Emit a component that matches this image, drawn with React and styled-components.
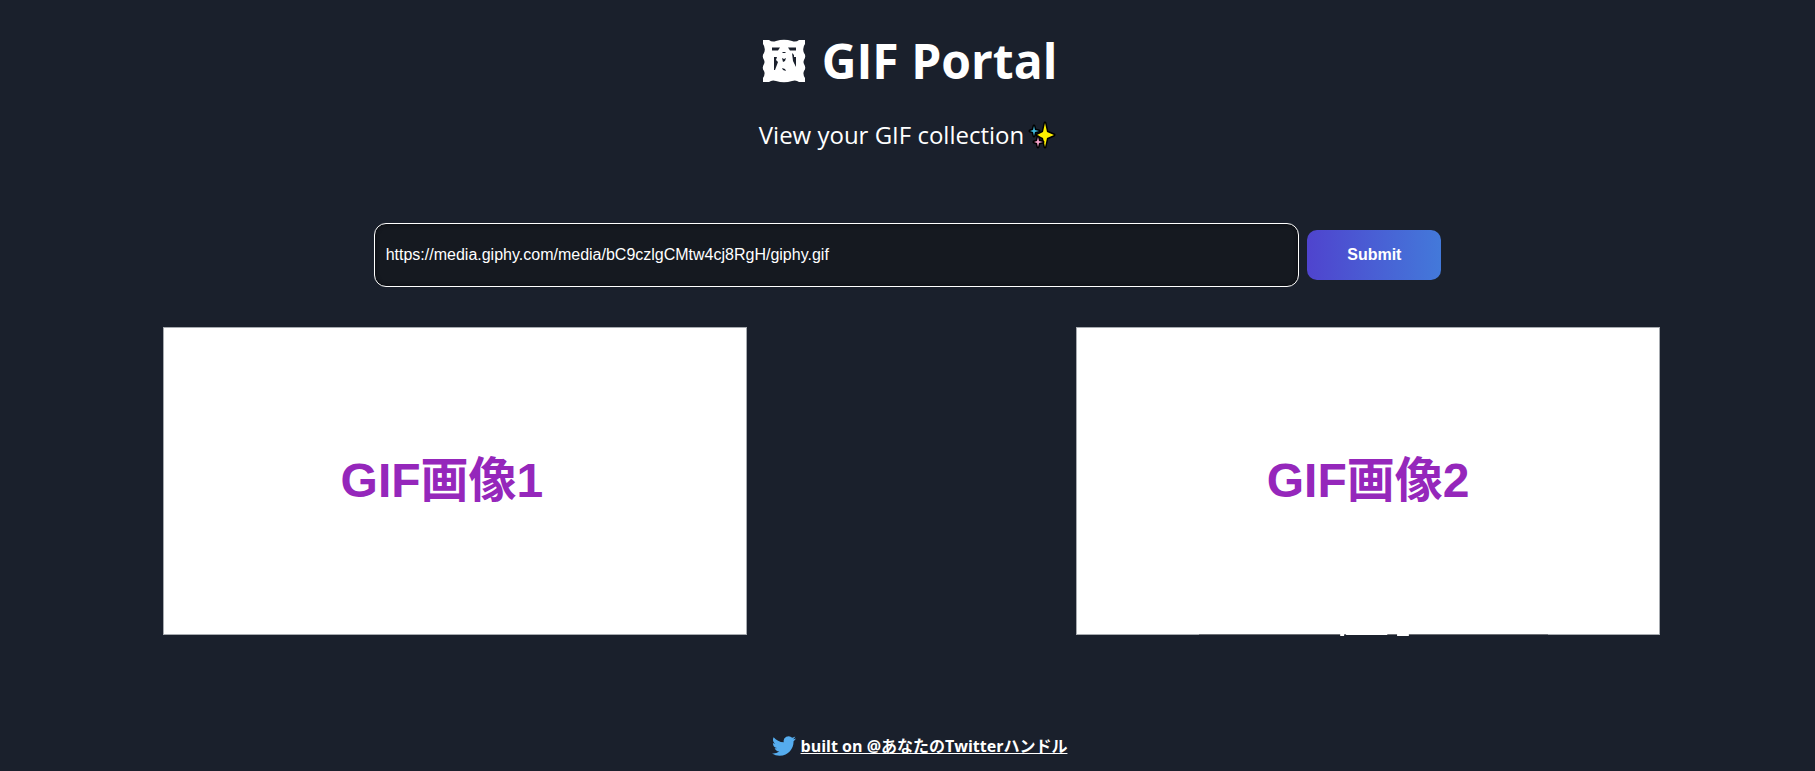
import React, { useState } from "react";
import styled, { createGlobalStyle } from "styled-components";

const uiFont = `"Open Sans", "Noto Sans", "Noto Sans CJK JP", sans-serif`;
const plainFont = `"Liberation Sans", "Noto Sans CJK JP", sans-serif`;

const GlobalStyle = createGlobalStyle`
  *, *::before, *::after { box-sizing: border-box; }
  body { margin: 0; background: #1a202c; color: #fff; font-family: ${uiFont}; }
`;

const Page = styled.div`
  min-height: 100vh;
  display: flex;
  flex-direction: column;
  text-align: center;
`;

const Header = styled.header`
  padding-top: 27px;
`;

const Title = styled.h1`
  display: flex;
  justify-content: center;
  align-items: center;
  gap: 16px;
  margin: 0;
  padding-left: 4px;
  font-size: 48px;
  line-height: 68px;
  font-weight: 700;
`;

const FrameIcon = styled.svg`
  width: 44px;
  height: 44px;
  flex: none;
`;

const Subtitle = styled.p`
  display: flex;
  justify-content: center;
  align-items: center;
  gap: 4px;
  margin: 23px 0 0;
  font-size: 24px;
  line-height: 34px;
`;

const SparkleIcon = styled.svg`
  width: 28px;
  height: 28px;
  flex: none;
`;

const Form = styled.form`
  display: flex;
  justify-content: center;
  align-items: center;
  gap: 8px;
  margin-top: 71px;
`;

const LinkInput = styled.input`
  flex: 0 1 51%;
  min-width: 0;
  height: 64px;
  padding: 0 11px;
  border: 1px solid #fff;
  border-radius: 12px;
  outline: none;
  background: #151920;
  box-shadow: inset 0 0 4px #08080c;
  color: #fff;
  font: 16px ${plainFont};
`;

const SubmitButton = styled.button`
  width: 134px;
  height: 50px;
  border: 0;
  border-radius: 10px;
  background: linear-gradient(90deg, #4f44ce, #4379da);
  color: #fff;
  font: 700 16px ${plainFont};
  cursor: pointer;
`;

const Gallery = styled.main`
  display: flex;
  justify-content: space-between;
  align-items: flex-start;
  margin-top: 40px;
  padding: 0 155px 0 163px;
`;

const Card = styled.figure`
  position: relative;
  flex: 0 0 39%;
  aspect-ratio: 583 / 308;
  display: flex;
  justify-content: center;
  align-items: center;
  margin: 0;
  padding-right: ${(p) => p.$inset}px;
  border: 1px solid #a7abb0;
  background: #fff;
`;

const Caption = styled.figcaption`
  color: #9527bb;
  font: 700 48px/60px ${plainFont};
`;

const CardEdge = styled.svg`
  position: absolute;
  top: 100%;
  left: 21%;
  width: 60%;
  height: 2px;
`;

const Footer = styled.footer`
  display: flex;
  justify-content: center;
  align-items: center;
  gap: 5px;
  margin-top: auto;
  padding: 0 0 13px 24px;
`;

const BirdIcon = styled.svg`
  width: 24px;
  height: 24px;
  flex: none;
`;

const FooterLink = styled.a`
  color: #fff;
  font-size: 16px;
  line-height: 24px;
  font-weight: 700;
`;

const Frame = () => (
  <FrameIcon viewBox="0 0 44 44" aria-hidden="true">
    <path
      fill="#fff"
      d="M1 1H7Q10 3.500 14 2Q22-.5 30 2Q34 3.500 37 1H43V5Q40 9 42 14Q44.500 17 42 21Q41 23 42 25Q44.500 29 42 32Q40.500 35 43 39V43H37Q34 40.500 30 42Q22 44.500 14 42Q10 40.500 7 43H1V39Q3.500 35 2 32Q-.5 29 2 25Q3 23 2 21Q-.5 17 2 14Q4 9 1 5Z"
    />
    <path
      fill="#1a202c"
      d="M10 8.500H18L16 11.500H10ZM26 8.500H34V11.500H28ZM12 18H15L14 21L16 23L13 31H12ZM30 14L32 16V18H34V28L31 22ZM20 13H24L23 14H21ZM20 19L22 20L24 19L23 22L21 23ZM20 29L23 30L24 32L21 31Z"
    />
  </FrameIcon>
);

const Sparkles = () => (
  <SparkleIcon viewBox="0 0 28 28" aria-hidden="true">
    <g stroke="#000" strokeWidth="3" strokeLinejoin="round" paintOrder="stroke">
      <path fill="#fff000" d="M17 2 19 11 26 14 19 17 17 26 15 17 9 14 15 11Z" />
      <path fill="#3fb8dc" d="M6 5 7 9 11 10 7 11 6 15 5 11 2 10 5 9Z" />
      <path fill="#f3a0c8" d="M10 16 11 20 15 21 11 22 10 26 9 22 6 21 9 20Z" />
    </g>
  </SparkleIcon>
);

const Bird = () => (
  <BirdIcon viewBox="0 0 24 24" aria-hidden="true">
    <path fill="#55acee" d="M23.954 4.569a10 10 0 0 1-2.825.775 4.958 4.958 0 0 0 2.163-2.723c-.951.555-2.005.959-3.127 1.184a4.92 4.92 0 0 0-8.384 4.482C7.691 8.094 4.066 6.13 1.64 3.161a4.822 4.822 0 0 0-.666 2.475c0 1.71.87 3.213 2.188 4.096a4.904 4.904 0 0 1-2.228-.616v.061a4.923 4.923 0 0 0 3.946 4.827 4.996 4.996 0 0 1-2.212.085 4.937 4.937 0 0 0 4.604 3.417 9.868 9.868 0 0 1-6.102 2.105c-.39 0-.779-.023-1.17-.067a13.995 13.995 0 0 0 7.557 2.209c9.054 0 13.999-7.496 13.999-13.986 0-.209 0-.42-.015-.63a9.936 9.936 0 0 0 2.46-2.548Z" />
  </BirdIcon>
);

const gifs = [
  { label: "GIF画像1", inset: 26 },
  { label: "GIF画像2", inset: 0, edge: true },
];

export default function App() {
  const [url, setUrl] = useState("https://media.giphy.com/media/bC9czlgCMtw4cj8RgH/giphy.gif");
  return (
    <Page>
      <GlobalStyle />
      <Header>
        <Title><Frame />GIF Portal</Title>
        <Subtitle>View your GIF collection<Sparkles /></Subtitle>
      </Header>
      <Form onSubmit={(e) => e.preventDefault()}>
        <LinkInput type="text" aria-label="GIF link" value={url} onChange={(e) => setUrl(e.target.value)} />
        <SubmitButton type="submit">Submit</SubmitButton>
      </Form>
      <Gallery>
        {gifs.map((gif) => (
          <Card key={gif.label} $inset={gif.inset}>
            <Caption>{gif.label}</Caption>
            {gif.edge && (
              <CardEdge viewBox="0 0 356 2" preserveAspectRatio="none" aria-hidden="true">
                <path fill="#6d7076" d="M0 0h356v1H0Z" />
                <path fill="#fff" d="M144 0h4v2h-4ZM150 0h42v1h-42ZM202 0h12v2h-12Z" />
              </CardEdge>
            )}
          </Card>
        ))}
      </Gallery>
      <Footer>
        <Bird />
        <FooterLink href="#twitter">built on @あなたのTwitterハンドル</FooterLink>
      </Footer>
    </Page>
  );
}
